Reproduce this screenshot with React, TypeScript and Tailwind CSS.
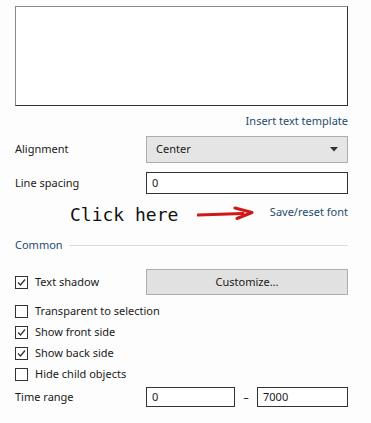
import React from "react";

const font = { fontFamily: '"Noto Sans", "Open Sans", sans-serif' };

function Check({ checked }: { checked: boolean }) {
  return (
    <div className="w-[13px] h-[13px] border border-[#333333] bg-white flex items-center justify-center shrink-0">
      {checked && (
        <svg width="9" height="9" viewBox="0 0 9 9">
          <path d="M1 4.5 L3.5 7 L8 1.5" fill="none" stroke="#333" strokeWidth="1.3" />
        </svg>
      )}
    </div>
  );
}

function CheckRow({ checked, label }: { checked: boolean; label: string }) {
  return (
    <div className="h-[21px] flex items-center gap-[7px]">
      <Check checked={checked} />
      <span>{label}</span>
    </div>
  );
}

export default function App() {
  return (
    <div className="w-[371px] h-[423px] bg-[#fdfdfd] text-[11px] text-[#1a1a1a] pl-[15px] pr-[23px] pt-[6px]" style={font}>
      <div className="h-[100px] bg-white border border-t-[#8a8a8a] border-l-[#8a8a8a] border-r-[#333333] border-b-[#333333]" />
      <div className="h-[30px] flex items-center justify-end text-[#1e4b6e]">Insert text template</div>
      <div className="h-[27px] flex items-center">
        <span className="w-[131px]">Alignment</span>
        <div className="flex-1 h-full bg-[#e5e5e5] border border-[#adadad] flex items-center justify-between pl-[9px] pr-[9px]">
          <span>Center</span>
          <svg width="8" height="5" viewBox="0 0 8 5"><path d="M0 0 L8 0 L4 4.5 Z" fill="#333" /></svg>
        </div>
      </div>
      <div className="h-[22px] flex items-center mt-[9px]">
        <span className="w-[131px]">Line spacing</span>
        <div className="flex-1 h-full bg-white border border-[#333333] flex items-center pl-[5px]">0</div>
      </div>
      <div className="h-[36px] flex items-center">
        <span className="ml-[55px] mt-[5px] text-[18px] text-[#111]" style={{ fontFamily: '"DejaVu Sans Mono", monospace' }}>Click here</span>
        <svg className="ml-[19px] mt-[1px]" width="58" height="14" viewBox="0 0 58 14">
          <path d="M1 9 L46 7.5" stroke="#d01818" strokeWidth="3" strokeLinecap="round" fill="none" />
          <path d="M38 2 L55 6.5 L40 12.5" stroke="#d01818" strokeWidth="3" strokeLinecap="round" strokeLinejoin="round" fill="none" />
        </svg>
        <span className="ml-auto text-[#1e4b6e]">Save/reset font</span>
      </div>
      <div className="h-[30px] flex items-center gap-[6px]">
        <span className="text-[#1e4b6e]">Common</span>
        <div className="flex-1 h-px bg-[#d6dde3]" />
      </div>
      <div className="h-[26px] flex items-center mt-[9px]">
        <div className="w-[131px] flex items-center gap-[7px]">
          <Check checked={true} />
          <span>Text shadow</span>
        </div>
        <div className="flex-1 h-full bg-[#e1e1e1] border border-[#adadad] flex items-center justify-center">Customize...</div>
      </div>
      <div className="mt-[6px]">
        <CheckRow checked={false} label="Transparent to selection" />
        <CheckRow checked={true} label="Show front side" />
        <CheckRow checked={true} label="Show back side" />
        <CheckRow checked={false} label="Hide child objects" />
      </div>
      <div className="h-[20px] flex items-center mt-[2px]">
        <span className="w-[131px]">Time range</span>
        <div className="w-[89px] h-full bg-white border border-[#333333] flex items-center pl-[5px]">0</div>
        <span className="w-[22px] text-center">–</span>
        <div className="flex-1 h-full bg-white border border-[#333333] flex items-center pl-[5px]">7000</div>
      </div>
    </div>
  );
}
